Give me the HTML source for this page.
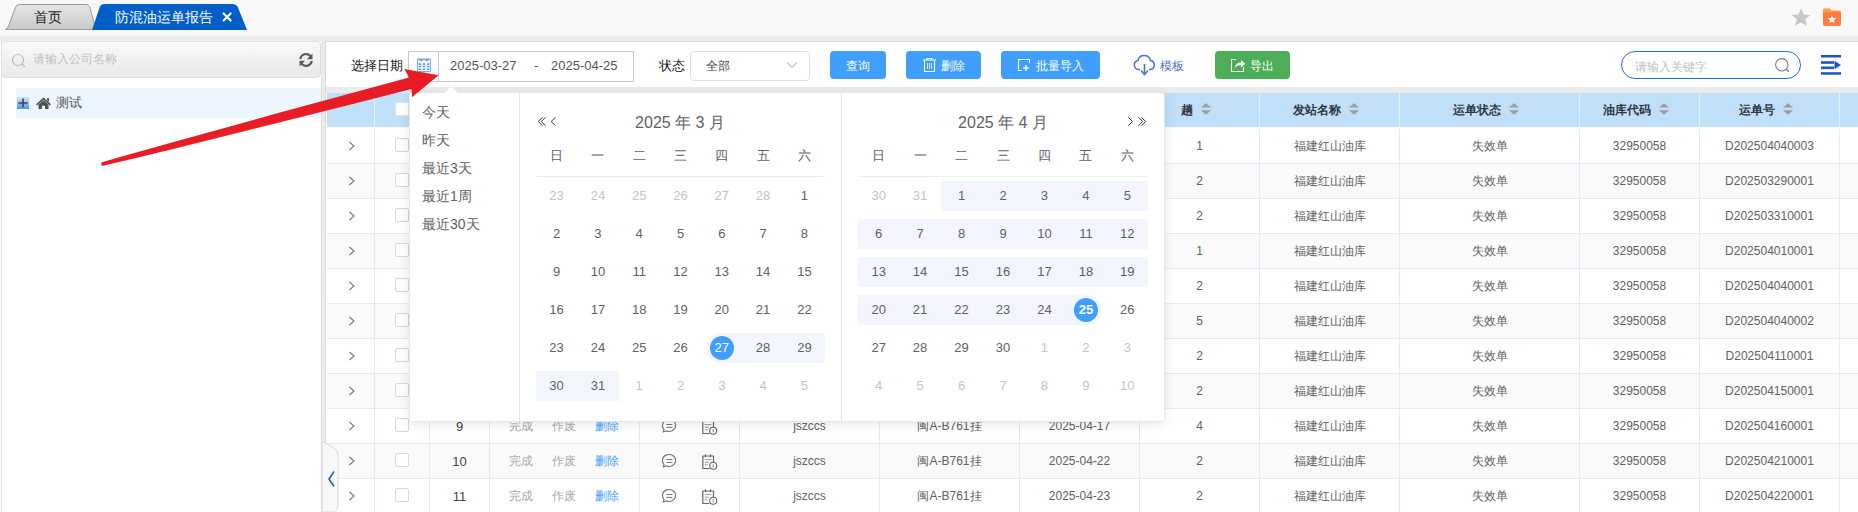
<!DOCTYPE html><html><head><meta charset="utf-8"><title>防混油运单报告</title><style>
*{box-sizing:border-box;margin:0;padding:0}
html,body{width:1858px;height:512px;overflow:hidden;background:#fff;font-family:"Liberation Sans",sans-serif;color:#606266}
div,span,svg{position:absolute}
.t{white-space:nowrap;line-height:1}
</style></head><body>
<div style="left:0;top:0;width:1858px;height:36px;background:#f8f8f8"></div>
<div style="left:0;top:36px;width:1858px;height:6px;background:#ececec"></div>
<svg style="left:0;top:0" width="260" height="36" viewBox="0 0 260 36">
<defs><linearGradient id="g1" x1="0" y1="0" x2="0" y2="1"><stop offset="0" stop-color="#e6e6e6"/><stop offset="1" stop-color="#c9c9c9"/></linearGradient></defs>
<path d="M5.5,29.5 Q7.6,28.6 8.6,26 L15.6,7 Q16.6,4.5 19,4.5 L86,4.5 Q88.5,4.5 89.5,6.5 L96,29.5 Z" fill="url(#g1)" stroke="#9a9a9a" stroke-width="1"/>
<path d="M92,30 L100,6.5 Q101,4 104,4 L233,4 Q236,4 237.5,6.5 L247,30 Z" fill="#005ec8"/>
</svg>
<div class="t" style="left:34px;top:10px;font-size:14px;color:#222">首页</div>
<div class="t" style="left:115px;top:10px;font-size:14px;color:#fff">防混油运单报告</div>
<svg style="left:220px;top:10px" width="14" height="14" viewBox="0 0 14 14"><path d="M3.6,3.4 L10.6,10.6 M10.6,3.4 L3.6,10.6" stroke="#fff" stroke-width="2.1" stroke-linecap="round"/></svg>
<svg style="left:1790px;top:6px" width="22" height="22" viewBox="0 0 22 22"><path d="M11,2 L13.6,8.4 L20.5,8.9 L15.2,13.3 L16.9,20 L11,16.4 L5.1,20 L6.8,13.3 L1.5,8.9 L8.4,8.4 Z" fill="#c8c8c8"/></svg>
<svg style="left:1822px;top:7px" width="20" height="20" viewBox="0 0 20 20"><path d="M1,3 Q1,1.5 2.5,1.5 L8,1.5 L9.5,3.5 L17.5,3.5 Q19,3.5 19,5 L19,7 L1,7 Z" fill="#f9a23c"/><rect x="1" y="5" width="18" height="14" rx="2" fill="#ff7b3f"/><path d="M10,8 L11.2,11 L14.3,11.2 L11.9,13.1 L12.7,16.2 L10,14.5 L7.3,16.2 L8.1,13.1 L5.7,11.2 L8.8,11 Z" fill="#fff"/></svg>
<div style="left:1px;top:41px;width:321px;height:471px;background:#fff;border-left:1px solid #dcdfe6"></div>
<div style="left:1px;top:41px;width:320px;height:37px;border:1px solid #dcdfe6;border-radius:4px;background:linear-gradient(#f9f9f9,#e9e9e9)"></div>
<svg style="left:11px;top:53px" width="16" height="16" viewBox="0 0 16 16"><circle cx="7" cy="7" r="5.5" fill="none" stroke="#bdbdbd" stroke-width="1.2"/><path d="M11,11 L14,14" stroke="#bdbdbd" stroke-width="1.2"/></svg>
<div class="t" style="left:33px;top:53px;font-size:12px;color:#c0c0c0">请输入公司名称</div>
<svg style="left:298px;top:52px" width="16" height="16" viewBox="0 0 16 16"><path d="M2.2,7 A6,6 0 0 1 12.6,4.2" fill="none" stroke="#5c5c5c" stroke-width="2.1"/><path d="M14.5,1.5 L14.5,7.2 L8.8,7.2 Z" fill="#5c5c5c"/><path d="M13.8,9 A6,6 0 0 1 3.4,11.8" fill="none" stroke="#5c5c5c" stroke-width="2.1"/><path d="M1.5,14.5 L1.5,8.8 L7.2,8.8 Z" fill="#5c5c5c"/></svg>
<div style="left:16px;top:88px;width:305px;height:30px;background:#edf5fe"></div>
<svg style="left:16px;top:96px" width="14" height="14" viewBox="0 0 14 14"><defs><linearGradient id="g2" x1="0" y1="0" x2="0" y2="1"><stop offset="0" stop-color="#d3e6fb"/><stop offset="1" stop-color="#4a98f0"/></linearGradient></defs><rect x="1" y="1" width="12" height="12" fill="url(#g2)"/><path d="M7,2.5 V11.5 M2.5,7 H11.5" stroke="#444" stroke-width="1.6"/></svg>
<svg style="left:35px;top:96px" width="17" height="14" viewBox="0 0 17 14"><path d="M8.5,1.5 L1,8.2 L2.2,9.4 L8.5,3.8 L14.8,9.4 L16,8.2 Z" fill="#555"/><path d="M12,2 H14 V6 L12,4.3 Z" fill="#555"/><path d="M3.5,8.5 L8.5,4.3 L13.5,8.5 V13 H10 V9.8 H7 V13 H3.5 Z" fill="#555"/></svg>
<div class="t" style="left:56px;top:95.5px;font-size:13px;color:#555">测试</div>
<div style="left:321px;top:41px;width:5px;height:471px;background:#ececec"></div>
<div style="left:321px;top:78px;width:1px;height:434px;background:#d9d9d9"></div>
<div style="left:325px;top:41px;width:1px;height:471px;background:#d9d9d9"></div>
<div style="left:325px;top:41px;width:1533px;height:1px;background:#d9d9d9"></div>
<div style="left:326px;top:42px;width:1532px;height:45px;background:#fff"></div>
<div style="left:326px;top:87px;width:1532px;height:6px;background:#ececec"></div>
<div class="t" style="left:351px;top:59px;font-size:13px;color:#111">选择日期</div>
<div style="left:408px;top:51px;width:226px;height:31px;border:1px solid #c6c8cc;background:#fff"></div>
<div style="left:438px;top:52px;width:1px;height:29px;background:#c6c8cc"></div>
<svg style="left:416px;top:57px" width="16" height="16" viewBox="0 0 16 16"><path d="M1.6,1.9 V14.6 H14.4 V1.9 H13 A2,2 0 0 1 9,1.9 H7 A2,2 0 0 1 3,1.9 Z" fill="none" stroke="#6aa6e4" stroke-width="1"/><path d="M3,1.6 A2,2.2 0 0 0 7,1.6Z M9,1.6 A2,2.2 0 0 0 13,1.6Z" fill="#6aa6e4"/><g fill="#5b9ce0"><rect x="2.6" y="6.3" width="2.6" height="1.6" rx=".5"/><rect x="6.7" y="6.3" width="2.6" height="1.6" rx=".5"/><rect x="10.8" y="6.3" width="2.6" height="1.6" rx=".5"/><rect x="2.6" y="8.8" width="2.6" height="1.5" rx=".5"/><rect x="6.7" y="8.8" width="2.6" height="1.5" rx=".5"/><rect x="10.8" y="8.8" width="2.6" height="1.5" rx=".5"/><rect x="2.6" y="11.5" width="2.6" height="1.5" rx=".5"/><rect x="6.7" y="11.5" width="2.6" height="1.5" rx=".5"/><rect x="10.8" y="11.5" width="2.6" height="1.5" rx=".5"/></g><path d="M2,8.3 H14 M2,10.9 H14 M5.7,5 V14 M9.8,5 V14" stroke="#d5e6f8" stroke-width=".6"/></svg>
<div class="t" style="left:450px;top:59px;font-size:13px;color:#555">2025-03-27</div>
<div class="t" style="left:534px;top:59px;font-size:13px;color:#555">-</div>
<div class="t" style="left:551px;top:59px;font-size:13px;color:#555">2025-04-25</div>
<div class="t" style="left:659px;top:59px;font-size:13px;color:#111">状态</div>
<div style="left:690px;top:51px;width:120px;height:30px;border:1px solid #dcdfe6;border-radius:4px;background:#fff"></div>
<div class="t" style="left:706px;top:60px;font-size:12px;color:#444">全部</div>
<svg style="left:786px;top:61px" width="12" height="8" viewBox="0 0 12 8"><path d="M1,1.5 L6,6.5 L11,1.5" fill="none" stroke="#c0c4cc" stroke-width="1.2"/></svg>
<div style="left:830px;top:51px;width:56px;height:28px;border-radius:4px;background:#409eff"></div>
<div style="left:906px;top:51px;width:75px;height:28px;border-radius:4px;background:#409eff"></div>
<div style="left:1001px;top:51px;width:99px;height:28px;border-radius:4px;background:#409eff"></div>
<div style="left:1215px;top:51px;width:75px;height:28px;border-radius:4px;background:#4cae58"></div>
<div class="t" style="left:846px;top:60px;font-size:12px;color:#fff">查询</div>
<svg style="left:922px;top:57px" width="15" height="16" viewBox="0 0 15 16"><path d="M1,3 H14 M5,3 V1.5 H10 V3" fill="none" stroke="#fff" stroke-width="1.1"/><path d="M2.5,3.5 V14.5 H12.5 V3.5" fill="none" stroke="#fff" stroke-width="1.1"/><path d="M5.5,6 V12 M7.5,6 V12 M9.5,6 V12" stroke="#cfe4ff" stroke-width="1"/></svg>
<div class="t" style="left:941px;top:60px;font-size:12px;color:#fff">删除</div>
<svg style="left:1017px;top:58px" width="14" height="14" viewBox="0 0 14 14"><path d="M5,12.5 H1.5 V1.5 H12.5 V5" fill="none" stroke="#fff" stroke-width="1.1"/><path d="M9,7 V13 M6,10 H12" stroke="#e8f2ff" stroke-width="1.6"/></svg>
<div class="t" style="left:1036px;top:60px;font-size:12px;color:#fff">批量导入</div>
<svg style="left:1133px;top:54px" width="23" height="22" viewBox="0 0 23 22"><path d="M7,15.5 H5.5 A4.5,4.5 0 0 1 5,6.6 A6.3,6.3 0 0 1 17.4,6.6 A4.5,4.5 0 0 1 17.5,15.5 H16" fill="none" stroke="#4a74cc" stroke-width="1.5"/><path d="M11.5,10 V20" stroke="#4a74cc" stroke-width="1.6"/><path d="M8,16.5 L11.5,20.5 L15,16.5" fill="none" stroke="#4a74cc" stroke-width="1.6"/></svg>
<div class="t" style="left:1160px;top:60px;font-size:12px;color:#5670c8">模板</div>
<svg style="left:1230px;top:58px" width="16" height="15" viewBox="0 0 16 15"><path d="M6,1.5 H1.5 V13.5 H13.5 V9" fill="none" stroke="#fff" stroke-width="1.1"/><path d="M4.5,10 Q6,4.5 11,4.5 V2 L15.3,5.8 L11,9.5 V7 Q7,7 4.5,10 Z" fill="#fff"/></svg>
<div class="t" style="left:1250px;top:60px;font-size:12px;color:#fff">导出</div>
<div style="left:1621px;top:51px;width:180px;height:28px;border:1.3px solid #1f70d6;border-radius:14px;background:#fff"></div>
<div class="t" style="left:1635px;top:60.5px;font-size:12px;color:#c0c0c0">请输入关键字</div>
<svg style="left:1774px;top:57px" width="16" height="16" viewBox="0 0 16 16"><circle cx="7.8" cy="7.8" r="6.2" fill="none" stroke="#777" stroke-width="1.1"/><path d="M12.3,12.3 L14.8,14.8" stroke="#777" stroke-width="1.3"/></svg>
<svg style="left:1820px;top:54px" width="22" height="22" viewBox="0 0 22 22"><g fill="#1a56c4"><rect x="1" y="1" width="20" height="2.5"/><rect x="1" y="7.2" width="13" height="2.6"/><rect x="1" y="12.5" width="13" height="2.6"/><rect x="1" y="18.2" width="20" height="2.5"/><path d="M14.5,6.8 L21,11 L14.5,15.2Z"/></g></svg>
<div style="left:326px;top:93px;width:1532px;height:419px;background:#fff"></div>
<div style="left:327px;top:93px;width:1531px;height:34px;background:#c0dff9"></div>
<div style="left:374px;top:93px;width:1px;height:34px;background:#e3effb"></div>
<div style="left:429px;top:93px;width:1px;height:34px;background:#e3effb"></div>
<div style="left:489px;top:93px;width:1px;height:34px;background:#e3effb"></div>
<div style="left:639px;top:93px;width:1px;height:34px;background:#e3effb"></div>
<div style="left:739px;top:93px;width:1px;height:34px;background:#e3effb"></div>
<div style="left:879px;top:93px;width:1px;height:34px;background:#e3effb"></div>
<div style="left:1019px;top:93px;width:1px;height:34px;background:#e3effb"></div>
<div style="left:1139px;top:93px;width:1px;height:34px;background:#e3effb"></div>
<div style="left:1259px;top:93px;width:1px;height:34px;background:#e3effb"></div>
<div style="left:1399px;top:93px;width:1px;height:34px;background:#e3effb"></div>
<div style="left:1579px;top:93px;width:1px;height:34px;background:#e3effb"></div>
<div style="left:1699px;top:93px;width:1px;height:34px;background:#e3effb"></div>
<div style="left:1839px;top:93px;width:1px;height:34px;background:#e3effb"></div>
<div style="left:327px;top:128px;width:1531px;height:35px;background:#fff"></div>
<div style="left:327px;top:163px;width:1531px;height:1px;background:#e6e9f2"></div>
<svg style="left:348px;top:141px" width="8" height="10" viewBox="0 0 8 10"><path d="M1.5,1 L6,5 L1.5,9" fill="none" stroke="#777" stroke-width="1.1"/></svg>
<div style="left:395px;top:138px;width:14px;height:14px;border:1px solid #d4d7de;border-radius:2px;background:#fff"></div>
<div class="t" style="left:359.5px;top:140px;width:200px;text-align:center;font-size:13px;color:#444;">1</div>
<div class="t" style="left:509px;top:140px;font-size:12px;color:#aaa">完成</div>
<div class="t" style="left:552px;top:140px;font-size:12px;color:#aaa">作废</div>
<div class="t" style="left:595px;top:140px;font-size:12px;color:#409eff">删除</div>
<svg style="left:661px;top:137px" width="17" height="16" viewBox="0 0 17 16"><path d="M3.2,12.6 A6.6,6 0 1 1 5.4,14 L2,15 Z" fill="none" stroke="#777" stroke-width="1.1" stroke-linejoin="round"/><path d="M5.4,7.5 H11.4 M5.4,10.4 H11.4" stroke="#777" stroke-width="1"/></svg>
<svg style="left:701px;top:138px" width="17" height="17" viewBox="0 0 17 17"><path d="M8.5,15.5 H1.8 V3 H12.5 V9" fill="none" stroke="#666" stroke-width="1.2" stroke-linejoin="round"/><path d="M4.5,1.3 V4.2 M9.5,1.3 V4.2" stroke="#666" stroke-width="1.1"/><path d="M3.8,6.6 H10.5 M3.8,9.2 H8 M3.8,11.8 H6.8" stroke="#999" stroke-width="1"/><circle cx="12.2" cy="12.8" r="3.5" fill="#fff" stroke="#666" stroke-width="1.1"/><path d="M12.2,11.3 V14.5" stroke="#777" stroke-width=".9"/></svg>
<div class="t" style="left:709.5px;top:140px;width:200px;text-align:center;font-size:12px;color:#606266;">jszccs</div>
<div class="t" style="left:849.5px;top:140px;width:200px;text-align:center;font-size:12px;color:#606266;">闽A-B761挂</div>
<div class="t" style="left:979.5px;top:140px;width:200px;text-align:center;font-size:12px;color:#606266;">2025-04-04</div>
<div class="t" style="left:1099.5px;top:140px;width:200px;text-align:center;font-size:12px;color:#606266;">1</div>
<div class="t" style="left:1229.5px;top:140px;width:200px;text-align:center;font-size:12px;color:#606266;">福建红山油库</div>
<div class="t" style="left:1389.5px;top:140px;width:200px;text-align:center;font-size:12px;color:#606266;">失效单</div>
<div class="t" style="left:1539.5px;top:140px;width:200px;text-align:center;font-size:12px;color:#606266;">32950058</div>
<div class="t" style="left:1669.5px;top:140px;width:200px;text-align:center;font-size:12px;color:#606266;">D202504040003</div>
<div style="left:327px;top:164px;width:1531px;height:35px;background:#fafafa"></div>
<div style="left:327px;top:198px;width:1531px;height:1px;background:#e6e9f2"></div>
<svg style="left:348px;top:176px" width="8" height="10" viewBox="0 0 8 10"><path d="M1.5,1 L6,5 L1.5,9" fill="none" stroke="#777" stroke-width="1.1"/></svg>
<div style="left:395px;top:173px;width:14px;height:14px;border:1px solid #d4d7de;border-radius:2px;background:#fff"></div>
<div class="t" style="left:359.5px;top:175px;width:200px;text-align:center;font-size:13px;color:#444;">2</div>
<div class="t" style="left:509px;top:175px;font-size:12px;color:#aaa">完成</div>
<div class="t" style="left:552px;top:175px;font-size:12px;color:#aaa">作废</div>
<div class="t" style="left:595px;top:175px;font-size:12px;color:#409eff">删除</div>
<svg style="left:661px;top:172px" width="17" height="16" viewBox="0 0 17 16"><path d="M3.2,12.6 A6.6,6 0 1 1 5.4,14 L2,15 Z" fill="none" stroke="#777" stroke-width="1.1" stroke-linejoin="round"/><path d="M5.4,7.5 H11.4 M5.4,10.4 H11.4" stroke="#777" stroke-width="1"/></svg>
<svg style="left:701px;top:173px" width="17" height="17" viewBox="0 0 17 17"><path d="M8.5,15.5 H1.8 V3 H12.5 V9" fill="none" stroke="#666" stroke-width="1.2" stroke-linejoin="round"/><path d="M4.5,1.3 V4.2 M9.5,1.3 V4.2" stroke="#666" stroke-width="1.1"/><path d="M3.8,6.6 H10.5 M3.8,9.2 H8 M3.8,11.8 H6.8" stroke="#999" stroke-width="1"/><circle cx="12.2" cy="12.8" r="3.5" fill="#fff" stroke="#666" stroke-width="1.1"/><path d="M12.2,11.3 V14.5" stroke="#777" stroke-width=".9"/></svg>
<div class="t" style="left:709.5px;top:175px;width:200px;text-align:center;font-size:12px;color:#606266;">jszccs</div>
<div class="t" style="left:849.5px;top:175px;width:200px;text-align:center;font-size:12px;color:#606266;">闽A-B761挂</div>
<div class="t" style="left:979.5px;top:175px;width:200px;text-align:center;font-size:12px;color:#606266;">2025-03-29</div>
<div class="t" style="left:1099.5px;top:175px;width:200px;text-align:center;font-size:12px;color:#606266;">2</div>
<div class="t" style="left:1229.5px;top:175px;width:200px;text-align:center;font-size:12px;color:#606266;">福建红山油库</div>
<div class="t" style="left:1389.5px;top:175px;width:200px;text-align:center;font-size:12px;color:#606266;">失效单</div>
<div class="t" style="left:1539.5px;top:175px;width:200px;text-align:center;font-size:12px;color:#606266;">32950058</div>
<div class="t" style="left:1669.5px;top:175px;width:200px;text-align:center;font-size:12px;color:#606266;">D202503290001</div>
<div style="left:327px;top:199px;width:1531px;height:35px;background:#fff"></div>
<div style="left:327px;top:233px;width:1531px;height:1px;background:#e6e9f2"></div>
<svg style="left:348px;top:211px" width="8" height="10" viewBox="0 0 8 10"><path d="M1.5,1 L6,5 L1.5,9" fill="none" stroke="#777" stroke-width="1.1"/></svg>
<div style="left:395px;top:208px;width:14px;height:14px;border:1px solid #d4d7de;border-radius:2px;background:#fff"></div>
<div class="t" style="left:359.5px;top:210px;width:200px;text-align:center;font-size:13px;color:#444;">3</div>
<div class="t" style="left:509px;top:210px;font-size:12px;color:#aaa">完成</div>
<div class="t" style="left:552px;top:210px;font-size:12px;color:#aaa">作废</div>
<div class="t" style="left:595px;top:210px;font-size:12px;color:#409eff">删除</div>
<svg style="left:661px;top:207px" width="17" height="16" viewBox="0 0 17 16"><path d="M3.2,12.6 A6.6,6 0 1 1 5.4,14 L2,15 Z" fill="none" stroke="#777" stroke-width="1.1" stroke-linejoin="round"/><path d="M5.4,7.5 H11.4 M5.4,10.4 H11.4" stroke="#777" stroke-width="1"/></svg>
<svg style="left:701px;top:208px" width="17" height="17" viewBox="0 0 17 17"><path d="M8.5,15.5 H1.8 V3 H12.5 V9" fill="none" stroke="#666" stroke-width="1.2" stroke-linejoin="round"/><path d="M4.5,1.3 V4.2 M9.5,1.3 V4.2" stroke="#666" stroke-width="1.1"/><path d="M3.8,6.6 H10.5 M3.8,9.2 H8 M3.8,11.8 H6.8" stroke="#999" stroke-width="1"/><circle cx="12.2" cy="12.8" r="3.5" fill="#fff" stroke="#666" stroke-width="1.1"/><path d="M12.2,11.3 V14.5" stroke="#777" stroke-width=".9"/></svg>
<div class="t" style="left:709.5px;top:210px;width:200px;text-align:center;font-size:12px;color:#606266;">jszccs</div>
<div class="t" style="left:849.5px;top:210px;width:200px;text-align:center;font-size:12px;color:#606266;">闽A-B761挂</div>
<div class="t" style="left:979.5px;top:210px;width:200px;text-align:center;font-size:12px;color:#606266;">2025-03-31</div>
<div class="t" style="left:1099.5px;top:210px;width:200px;text-align:center;font-size:12px;color:#606266;">2</div>
<div class="t" style="left:1229.5px;top:210px;width:200px;text-align:center;font-size:12px;color:#606266;">福建红山油库</div>
<div class="t" style="left:1389.5px;top:210px;width:200px;text-align:center;font-size:12px;color:#606266;">失效单</div>
<div class="t" style="left:1539.5px;top:210px;width:200px;text-align:center;font-size:12px;color:#606266;">32950058</div>
<div class="t" style="left:1669.5px;top:210px;width:200px;text-align:center;font-size:12px;color:#606266;">D202503310001</div>
<div style="left:327px;top:234px;width:1531px;height:35px;background:#fafafa"></div>
<div style="left:327px;top:268px;width:1531px;height:1px;background:#e6e9f2"></div>
<svg style="left:348px;top:246px" width="8" height="10" viewBox="0 0 8 10"><path d="M1.5,1 L6,5 L1.5,9" fill="none" stroke="#777" stroke-width="1.1"/></svg>
<div style="left:395px;top:243px;width:14px;height:14px;border:1px solid #d4d7de;border-radius:2px;background:#fff"></div>
<div class="t" style="left:359.5px;top:245px;width:200px;text-align:center;font-size:13px;color:#444;">4</div>
<div class="t" style="left:509px;top:245px;font-size:12px;color:#aaa">完成</div>
<div class="t" style="left:552px;top:245px;font-size:12px;color:#aaa">作废</div>
<div class="t" style="left:595px;top:245px;font-size:12px;color:#409eff">删除</div>
<svg style="left:661px;top:242px" width="17" height="16" viewBox="0 0 17 16"><path d="M3.2,12.6 A6.6,6 0 1 1 5.4,14 L2,15 Z" fill="none" stroke="#777" stroke-width="1.1" stroke-linejoin="round"/><path d="M5.4,7.5 H11.4 M5.4,10.4 H11.4" stroke="#777" stroke-width="1"/></svg>
<svg style="left:701px;top:243px" width="17" height="17" viewBox="0 0 17 17"><path d="M8.5,15.5 H1.8 V3 H12.5 V9" fill="none" stroke="#666" stroke-width="1.2" stroke-linejoin="round"/><path d="M4.5,1.3 V4.2 M9.5,1.3 V4.2" stroke="#666" stroke-width="1.1"/><path d="M3.8,6.6 H10.5 M3.8,9.2 H8 M3.8,11.8 H6.8" stroke="#999" stroke-width="1"/><circle cx="12.2" cy="12.8" r="3.5" fill="#fff" stroke="#666" stroke-width="1.1"/><path d="M12.2,11.3 V14.5" stroke="#777" stroke-width=".9"/></svg>
<div class="t" style="left:709.5px;top:245px;width:200px;text-align:center;font-size:12px;color:#606266;">jszccs</div>
<div class="t" style="left:849.5px;top:245px;width:200px;text-align:center;font-size:12px;color:#606266;">闽A-B761挂</div>
<div class="t" style="left:979.5px;top:245px;width:200px;text-align:center;font-size:12px;color:#606266;">2025-04-01</div>
<div class="t" style="left:1099.5px;top:245px;width:200px;text-align:center;font-size:12px;color:#606266;">1</div>
<div class="t" style="left:1229.5px;top:245px;width:200px;text-align:center;font-size:12px;color:#606266;">福建红山油库</div>
<div class="t" style="left:1389.5px;top:245px;width:200px;text-align:center;font-size:12px;color:#606266;">失效单</div>
<div class="t" style="left:1539.5px;top:245px;width:200px;text-align:center;font-size:12px;color:#606266;">32950058</div>
<div class="t" style="left:1669.5px;top:245px;width:200px;text-align:center;font-size:12px;color:#606266;">D202504010001</div>
<div style="left:327px;top:269px;width:1531px;height:35px;background:#fff"></div>
<div style="left:327px;top:303px;width:1531px;height:1px;background:#e6e9f2"></div>
<svg style="left:348px;top:281px" width="8" height="10" viewBox="0 0 8 10"><path d="M1.5,1 L6,5 L1.5,9" fill="none" stroke="#777" stroke-width="1.1"/></svg>
<div style="left:395px;top:278px;width:14px;height:14px;border:1px solid #d4d7de;border-radius:2px;background:#fff"></div>
<div class="t" style="left:359.5px;top:280px;width:200px;text-align:center;font-size:13px;color:#444;">5</div>
<div class="t" style="left:509px;top:280px;font-size:12px;color:#aaa">完成</div>
<div class="t" style="left:552px;top:280px;font-size:12px;color:#aaa">作废</div>
<div class="t" style="left:595px;top:280px;font-size:12px;color:#409eff">删除</div>
<svg style="left:661px;top:277px" width="17" height="16" viewBox="0 0 17 16"><path d="M3.2,12.6 A6.6,6 0 1 1 5.4,14 L2,15 Z" fill="none" stroke="#777" stroke-width="1.1" stroke-linejoin="round"/><path d="M5.4,7.5 H11.4 M5.4,10.4 H11.4" stroke="#777" stroke-width="1"/></svg>
<svg style="left:701px;top:278px" width="17" height="17" viewBox="0 0 17 17"><path d="M8.5,15.5 H1.8 V3 H12.5 V9" fill="none" stroke="#666" stroke-width="1.2" stroke-linejoin="round"/><path d="M4.5,1.3 V4.2 M9.5,1.3 V4.2" stroke="#666" stroke-width="1.1"/><path d="M3.8,6.6 H10.5 M3.8,9.2 H8 M3.8,11.8 H6.8" stroke="#999" stroke-width="1"/><circle cx="12.2" cy="12.8" r="3.5" fill="#fff" stroke="#666" stroke-width="1.1"/><path d="M12.2,11.3 V14.5" stroke="#777" stroke-width=".9"/></svg>
<div class="t" style="left:709.5px;top:280px;width:200px;text-align:center;font-size:12px;color:#606266;">jszccs</div>
<div class="t" style="left:849.5px;top:280px;width:200px;text-align:center;font-size:12px;color:#606266;">闽A-B761挂</div>
<div class="t" style="left:979.5px;top:280px;width:200px;text-align:center;font-size:12px;color:#606266;">2025-04-04</div>
<div class="t" style="left:1099.5px;top:280px;width:200px;text-align:center;font-size:12px;color:#606266;">2</div>
<div class="t" style="left:1229.5px;top:280px;width:200px;text-align:center;font-size:12px;color:#606266;">福建红山油库</div>
<div class="t" style="left:1389.5px;top:280px;width:200px;text-align:center;font-size:12px;color:#606266;">失效单</div>
<div class="t" style="left:1539.5px;top:280px;width:200px;text-align:center;font-size:12px;color:#606266;">32950058</div>
<div class="t" style="left:1669.5px;top:280px;width:200px;text-align:center;font-size:12px;color:#606266;">D202504040001</div>
<div style="left:327px;top:304px;width:1531px;height:35px;background:#fafafa"></div>
<div style="left:327px;top:338px;width:1531px;height:1px;background:#e6e9f2"></div>
<svg style="left:348px;top:316px" width="8" height="10" viewBox="0 0 8 10"><path d="M1.5,1 L6,5 L1.5,9" fill="none" stroke="#777" stroke-width="1.1"/></svg>
<div style="left:395px;top:313px;width:14px;height:14px;border:1px solid #d4d7de;border-radius:2px;background:#fff"></div>
<div class="t" style="left:359.5px;top:315px;width:200px;text-align:center;font-size:13px;color:#444;">6</div>
<div class="t" style="left:509px;top:315px;font-size:12px;color:#aaa">完成</div>
<div class="t" style="left:552px;top:315px;font-size:12px;color:#aaa">作废</div>
<div class="t" style="left:595px;top:315px;font-size:12px;color:#409eff">删除</div>
<svg style="left:661px;top:312px" width="17" height="16" viewBox="0 0 17 16"><path d="M3.2,12.6 A6.6,6 0 1 1 5.4,14 L2,15 Z" fill="none" stroke="#777" stroke-width="1.1" stroke-linejoin="round"/><path d="M5.4,7.5 H11.4 M5.4,10.4 H11.4" stroke="#777" stroke-width="1"/></svg>
<svg style="left:701px;top:313px" width="17" height="17" viewBox="0 0 17 17"><path d="M8.5,15.5 H1.8 V3 H12.5 V9" fill="none" stroke="#666" stroke-width="1.2" stroke-linejoin="round"/><path d="M4.5,1.3 V4.2 M9.5,1.3 V4.2" stroke="#666" stroke-width="1.1"/><path d="M3.8,6.6 H10.5 M3.8,9.2 H8 M3.8,11.8 H6.8" stroke="#999" stroke-width="1"/><circle cx="12.2" cy="12.8" r="3.5" fill="#fff" stroke="#666" stroke-width="1.1"/><path d="M12.2,11.3 V14.5" stroke="#777" stroke-width=".9"/></svg>
<div class="t" style="left:709.5px;top:315px;width:200px;text-align:center;font-size:12px;color:#606266;">jszccs</div>
<div class="t" style="left:849.5px;top:315px;width:200px;text-align:center;font-size:12px;color:#606266;">闽A-B761挂</div>
<div class="t" style="left:979.5px;top:315px;width:200px;text-align:center;font-size:12px;color:#606266;">2025-04-04</div>
<div class="t" style="left:1099.5px;top:315px;width:200px;text-align:center;font-size:12px;color:#606266;">5</div>
<div class="t" style="left:1229.5px;top:315px;width:200px;text-align:center;font-size:12px;color:#606266;">福建红山油库</div>
<div class="t" style="left:1389.5px;top:315px;width:200px;text-align:center;font-size:12px;color:#606266;">失效单</div>
<div class="t" style="left:1539.5px;top:315px;width:200px;text-align:center;font-size:12px;color:#606266;">32950058</div>
<div class="t" style="left:1669.5px;top:315px;width:200px;text-align:center;font-size:12px;color:#606266;">D202504040002</div>
<div style="left:327px;top:339px;width:1531px;height:35px;background:#fff"></div>
<div style="left:327px;top:373px;width:1531px;height:1px;background:#e6e9f2"></div>
<svg style="left:348px;top:351px" width="8" height="10" viewBox="0 0 8 10"><path d="M1.5,1 L6,5 L1.5,9" fill="none" stroke="#777" stroke-width="1.1"/></svg>
<div style="left:395px;top:348px;width:14px;height:14px;border:1px solid #d4d7de;border-radius:2px;background:#fff"></div>
<div class="t" style="left:359.5px;top:350px;width:200px;text-align:center;font-size:13px;color:#444;">7</div>
<div class="t" style="left:509px;top:350px;font-size:12px;color:#aaa">完成</div>
<div class="t" style="left:552px;top:350px;font-size:12px;color:#aaa">作废</div>
<div class="t" style="left:595px;top:350px;font-size:12px;color:#409eff">删除</div>
<svg style="left:661px;top:347px" width="17" height="16" viewBox="0 0 17 16"><path d="M3.2,12.6 A6.6,6 0 1 1 5.4,14 L2,15 Z" fill="none" stroke="#777" stroke-width="1.1" stroke-linejoin="round"/><path d="M5.4,7.5 H11.4 M5.4,10.4 H11.4" stroke="#777" stroke-width="1"/></svg>
<svg style="left:701px;top:348px" width="17" height="17" viewBox="0 0 17 17"><path d="M8.5,15.5 H1.8 V3 H12.5 V9" fill="none" stroke="#666" stroke-width="1.2" stroke-linejoin="round"/><path d="M4.5,1.3 V4.2 M9.5,1.3 V4.2" stroke="#666" stroke-width="1.1"/><path d="M3.8,6.6 H10.5 M3.8,9.2 H8 M3.8,11.8 H6.8" stroke="#999" stroke-width="1"/><circle cx="12.2" cy="12.8" r="3.5" fill="#fff" stroke="#666" stroke-width="1.1"/><path d="M12.2,11.3 V14.5" stroke="#777" stroke-width=".9"/></svg>
<div class="t" style="left:709.5px;top:350px;width:200px;text-align:center;font-size:12px;color:#606266;">jszccs</div>
<div class="t" style="left:849.5px;top:350px;width:200px;text-align:center;font-size:12px;color:#606266;">闽A-B761挂</div>
<div class="t" style="left:979.5px;top:350px;width:200px;text-align:center;font-size:12px;color:#606266;">2025-04-11</div>
<div class="t" style="left:1099.5px;top:350px;width:200px;text-align:center;font-size:12px;color:#606266;">2</div>
<div class="t" style="left:1229.5px;top:350px;width:200px;text-align:center;font-size:12px;color:#606266;">福建红山油库</div>
<div class="t" style="left:1389.5px;top:350px;width:200px;text-align:center;font-size:12px;color:#606266;">失效单</div>
<div class="t" style="left:1539.5px;top:350px;width:200px;text-align:center;font-size:12px;color:#606266;">32950058</div>
<div class="t" style="left:1669.5px;top:350px;width:200px;text-align:center;font-size:12px;color:#606266;">D202504110001</div>
<div style="left:327px;top:374px;width:1531px;height:35px;background:#fafafa"></div>
<div style="left:327px;top:408px;width:1531px;height:1px;background:#e6e9f2"></div>
<svg style="left:348px;top:386px" width="8" height="10" viewBox="0 0 8 10"><path d="M1.5,1 L6,5 L1.5,9" fill="none" stroke="#777" stroke-width="1.1"/></svg>
<div style="left:395px;top:383px;width:14px;height:14px;border:1px solid #d4d7de;border-radius:2px;background:#fff"></div>
<div class="t" style="left:359.5px;top:385px;width:200px;text-align:center;font-size:13px;color:#444;">8</div>
<div class="t" style="left:509px;top:385px;font-size:12px;color:#aaa">完成</div>
<div class="t" style="left:552px;top:385px;font-size:12px;color:#aaa">作废</div>
<div class="t" style="left:595px;top:385px;font-size:12px;color:#409eff">删除</div>
<svg style="left:661px;top:382px" width="17" height="16" viewBox="0 0 17 16"><path d="M3.2,12.6 A6.6,6 0 1 1 5.4,14 L2,15 Z" fill="none" stroke="#777" stroke-width="1.1" stroke-linejoin="round"/><path d="M5.4,7.5 H11.4 M5.4,10.4 H11.4" stroke="#777" stroke-width="1"/></svg>
<svg style="left:701px;top:383px" width="17" height="17" viewBox="0 0 17 17"><path d="M8.5,15.5 H1.8 V3 H12.5 V9" fill="none" stroke="#666" stroke-width="1.2" stroke-linejoin="round"/><path d="M4.5,1.3 V4.2 M9.5,1.3 V4.2" stroke="#666" stroke-width="1.1"/><path d="M3.8,6.6 H10.5 M3.8,9.2 H8 M3.8,11.8 H6.8" stroke="#999" stroke-width="1"/><circle cx="12.2" cy="12.8" r="3.5" fill="#fff" stroke="#666" stroke-width="1.1"/><path d="M12.2,11.3 V14.5" stroke="#777" stroke-width=".9"/></svg>
<div class="t" style="left:709.5px;top:385px;width:200px;text-align:center;font-size:12px;color:#606266;">jszccs</div>
<div class="t" style="left:849.5px;top:385px;width:200px;text-align:center;font-size:12px;color:#606266;">闽A-B761挂</div>
<div class="t" style="left:979.5px;top:385px;width:200px;text-align:center;font-size:12px;color:#606266;">2025-04-15</div>
<div class="t" style="left:1099.5px;top:385px;width:200px;text-align:center;font-size:12px;color:#606266;">2</div>
<div class="t" style="left:1229.5px;top:385px;width:200px;text-align:center;font-size:12px;color:#606266;">福建红山油库</div>
<div class="t" style="left:1389.5px;top:385px;width:200px;text-align:center;font-size:12px;color:#606266;">失效单</div>
<div class="t" style="left:1539.5px;top:385px;width:200px;text-align:center;font-size:12px;color:#606266;">32950058</div>
<div class="t" style="left:1669.5px;top:385px;width:200px;text-align:center;font-size:12px;color:#606266;">D202504150001</div>
<div style="left:327px;top:409px;width:1531px;height:35px;background:#fff"></div>
<div style="left:327px;top:443px;width:1531px;height:1px;background:#e6e9f2"></div>
<svg style="left:348px;top:421px" width="8" height="10" viewBox="0 0 8 10"><path d="M1.5,1 L6,5 L1.5,9" fill="none" stroke="#777" stroke-width="1.1"/></svg>
<div style="left:395px;top:418px;width:14px;height:14px;border:1px solid #d4d7de;border-radius:2px;background:#fff"></div>
<div class="t" style="left:359.5px;top:420px;width:200px;text-align:center;font-size:13px;color:#444;">9</div>
<div class="t" style="left:509px;top:420px;font-size:12px;color:#aaa">完成</div>
<div class="t" style="left:552px;top:420px;font-size:12px;color:#aaa">作废</div>
<div class="t" style="left:595px;top:420px;font-size:12px;color:#409eff">删除</div>
<svg style="left:661px;top:417px" width="17" height="16" viewBox="0 0 17 16"><path d="M3.2,12.6 A6.6,6 0 1 1 5.4,14 L2,15 Z" fill="none" stroke="#777" stroke-width="1.1" stroke-linejoin="round"/><path d="M5.4,7.5 H11.4 M5.4,10.4 H11.4" stroke="#777" stroke-width="1"/></svg>
<svg style="left:701px;top:418px" width="17" height="17" viewBox="0 0 17 17"><path d="M8.5,15.5 H1.8 V3 H12.5 V9" fill="none" stroke="#666" stroke-width="1.2" stroke-linejoin="round"/><path d="M4.5,1.3 V4.2 M9.5,1.3 V4.2" stroke="#666" stroke-width="1.1"/><path d="M3.8,6.6 H10.5 M3.8,9.2 H8 M3.8,11.8 H6.8" stroke="#999" stroke-width="1"/><circle cx="12.2" cy="12.8" r="3.5" fill="#fff" stroke="#666" stroke-width="1.1"/><path d="M12.2,11.3 V14.5" stroke="#777" stroke-width=".9"/></svg>
<div class="t" style="left:709.5px;top:420px;width:200px;text-align:center;font-size:12px;color:#606266;">jszccs</div>
<div class="t" style="left:849.5px;top:420px;width:200px;text-align:center;font-size:12px;color:#606266;">闽A-B761挂</div>
<div class="t" style="left:979.5px;top:420px;width:200px;text-align:center;font-size:12px;color:#606266;">2025-04-17</div>
<div class="t" style="left:1099.5px;top:420px;width:200px;text-align:center;font-size:12px;color:#606266;">4</div>
<div class="t" style="left:1229.5px;top:420px;width:200px;text-align:center;font-size:12px;color:#606266;">福建红山油库</div>
<div class="t" style="left:1389.5px;top:420px;width:200px;text-align:center;font-size:12px;color:#606266;">失效单</div>
<div class="t" style="left:1539.5px;top:420px;width:200px;text-align:center;font-size:12px;color:#606266;">32950058</div>
<div class="t" style="left:1669.5px;top:420px;width:200px;text-align:center;font-size:12px;color:#606266;">D202504160001</div>
<div style="left:327px;top:444px;width:1531px;height:35px;background:#fafafa"></div>
<div style="left:327px;top:478px;width:1531px;height:1px;background:#e6e9f2"></div>
<svg style="left:348px;top:456px" width="8" height="10" viewBox="0 0 8 10"><path d="M1.5,1 L6,5 L1.5,9" fill="none" stroke="#777" stroke-width="1.1"/></svg>
<div style="left:395px;top:453px;width:14px;height:14px;border:1px solid #d4d7de;border-radius:2px;background:#fff"></div>
<div class="t" style="left:359.5px;top:455px;width:200px;text-align:center;font-size:13px;color:#444;">10</div>
<div class="t" style="left:509px;top:455px;font-size:12px;color:#aaa">完成</div>
<div class="t" style="left:552px;top:455px;font-size:12px;color:#aaa">作废</div>
<div class="t" style="left:595px;top:455px;font-size:12px;color:#409eff">删除</div>
<svg style="left:661px;top:452px" width="17" height="16" viewBox="0 0 17 16"><path d="M3.2,12.6 A6.6,6 0 1 1 5.4,14 L2,15 Z" fill="none" stroke="#777" stroke-width="1.1" stroke-linejoin="round"/><path d="M5.4,7.5 H11.4 M5.4,10.4 H11.4" stroke="#777" stroke-width="1"/></svg>
<svg style="left:701px;top:453px" width="17" height="17" viewBox="0 0 17 17"><path d="M8.5,15.5 H1.8 V3 H12.5 V9" fill="none" stroke="#666" stroke-width="1.2" stroke-linejoin="round"/><path d="M4.5,1.3 V4.2 M9.5,1.3 V4.2" stroke="#666" stroke-width="1.1"/><path d="M3.8,6.6 H10.5 M3.8,9.2 H8 M3.8,11.8 H6.8" stroke="#999" stroke-width="1"/><circle cx="12.2" cy="12.8" r="3.5" fill="#fff" stroke="#666" stroke-width="1.1"/><path d="M12.2,11.3 V14.5" stroke="#777" stroke-width=".9"/></svg>
<div class="t" style="left:709.5px;top:455px;width:200px;text-align:center;font-size:12px;color:#606266;">jszccs</div>
<div class="t" style="left:849.5px;top:455px;width:200px;text-align:center;font-size:12px;color:#606266;">闽A-B761挂</div>
<div class="t" style="left:979.5px;top:455px;width:200px;text-align:center;font-size:12px;color:#606266;">2025-04-22</div>
<div class="t" style="left:1099.5px;top:455px;width:200px;text-align:center;font-size:12px;color:#606266;">2</div>
<div class="t" style="left:1229.5px;top:455px;width:200px;text-align:center;font-size:12px;color:#606266;">福建红山油库</div>
<div class="t" style="left:1389.5px;top:455px;width:200px;text-align:center;font-size:12px;color:#606266;">失效单</div>
<div class="t" style="left:1539.5px;top:455px;width:200px;text-align:center;font-size:12px;color:#606266;">32950058</div>
<div class="t" style="left:1669.5px;top:455px;width:200px;text-align:center;font-size:12px;color:#606266;">D202504210001</div>
<div style="left:327px;top:479px;width:1531px;height:35px;background:#fff"></div>
<div style="left:327px;top:513px;width:1531px;height:1px;background:#e6e9f2"></div>
<svg style="left:348px;top:491px" width="8" height="10" viewBox="0 0 8 10"><path d="M1.5,1 L6,5 L1.5,9" fill="none" stroke="#777" stroke-width="1.1"/></svg>
<div style="left:395px;top:488px;width:14px;height:14px;border:1px solid #d4d7de;border-radius:2px;background:#fff"></div>
<div class="t" style="left:359.5px;top:490px;width:200px;text-align:center;font-size:13px;color:#444;">11</div>
<div class="t" style="left:509px;top:490px;font-size:12px;color:#aaa">完成</div>
<div class="t" style="left:552px;top:490px;font-size:12px;color:#aaa">作废</div>
<div class="t" style="left:595px;top:490px;font-size:12px;color:#409eff">删除</div>
<svg style="left:661px;top:487px" width="17" height="16" viewBox="0 0 17 16"><path d="M3.2,12.6 A6.6,6 0 1 1 5.4,14 L2,15 Z" fill="none" stroke="#777" stroke-width="1.1" stroke-linejoin="round"/><path d="M5.4,7.5 H11.4 M5.4,10.4 H11.4" stroke="#777" stroke-width="1"/></svg>
<svg style="left:701px;top:488px" width="17" height="17" viewBox="0 0 17 17"><path d="M8.5,15.5 H1.8 V3 H12.5 V9" fill="none" stroke="#666" stroke-width="1.2" stroke-linejoin="round"/><path d="M4.5,1.3 V4.2 M9.5,1.3 V4.2" stroke="#666" stroke-width="1.1"/><path d="M3.8,6.6 H10.5 M3.8,9.2 H8 M3.8,11.8 H6.8" stroke="#999" stroke-width="1"/><circle cx="12.2" cy="12.8" r="3.5" fill="#fff" stroke="#666" stroke-width="1.1"/><path d="M12.2,11.3 V14.5" stroke="#777" stroke-width=".9"/></svg>
<div class="t" style="left:709.5px;top:490px;width:200px;text-align:center;font-size:12px;color:#606266;">jszccs</div>
<div class="t" style="left:849.5px;top:490px;width:200px;text-align:center;font-size:12px;color:#606266;">闽A-B761挂</div>
<div class="t" style="left:979.5px;top:490px;width:200px;text-align:center;font-size:12px;color:#606266;">2025-04-23</div>
<div class="t" style="left:1099.5px;top:490px;width:200px;text-align:center;font-size:12px;color:#606266;">2</div>
<div class="t" style="left:1229.5px;top:490px;width:200px;text-align:center;font-size:12px;color:#606266;">福建红山油库</div>
<div class="t" style="left:1389.5px;top:490px;width:200px;text-align:center;font-size:12px;color:#606266;">失效单</div>
<div class="t" style="left:1539.5px;top:490px;width:200px;text-align:center;font-size:12px;color:#606266;">32950058</div>
<div class="t" style="left:1669.5px;top:490px;width:200px;text-align:center;font-size:12px;color:#606266;">D202504220001</div>
<div style="left:374px;top:129px;width:1px;height:383px;background:#e6e9f2"></div>
<div style="left:429px;top:129px;width:1px;height:383px;background:#e6e9f2"></div>
<div style="left:489px;top:129px;width:1px;height:383px;background:#e6e9f2"></div>
<div style="left:639px;top:129px;width:1px;height:383px;background:#e6e9f2"></div>
<div style="left:739px;top:129px;width:1px;height:383px;background:#e6e9f2"></div>
<div style="left:879px;top:129px;width:1px;height:383px;background:#e6e9f2"></div>
<div style="left:1019px;top:129px;width:1px;height:383px;background:#e6e9f2"></div>
<div style="left:1139px;top:129px;width:1px;height:383px;background:#e6e9f2"></div>
<div style="left:1259px;top:129px;width:1px;height:383px;background:#e6e9f2"></div>
<div style="left:1399px;top:129px;width:1px;height:383px;background:#e6e9f2"></div>
<div style="left:1579px;top:129px;width:1px;height:383px;background:#e6e9f2"></div>
<div style="left:1699px;top:129px;width:1px;height:383px;background:#e6e9f2"></div>
<div style="left:1839px;top:129px;width:1px;height:383px;background:#e6e9f2"></div>
<div style="left:395px;top:102px;width:14px;height:14px;border:1px solid #dfe6ee;border-radius:2px;background:#fff"></div>
<div class="t" style="left:1181px;top:103.5px;font-size:12px;font-weight:bold;color:#303641">趟</div>
<svg style="left:1201px;top:103px" width="10" height="12" viewBox="0 0 10 12"><path d="M0,4.6 L5,0.2 L10,4.6Z M0,7.2 L10,7.2 L5,11.8Z" fill="#9e9c9c"/></svg>
<div class="t" style="left:1293px;top:103.5px;font-size:12px;font-weight:bold;color:#303641">发站名称</div>
<svg style="left:1349px;top:103px" width="10" height="12" viewBox="0 0 10 12"><path d="M0,4.6 L5,0.2 L10,4.6Z M0,7.2 L10,7.2 L5,11.8Z" fill="#9e9c9c"/></svg>
<div class="t" style="left:1453px;top:103.5px;font-size:12px;font-weight:bold;color:#303641">运单状态</div>
<svg style="left:1509px;top:103px" width="10" height="12" viewBox="0 0 10 12"><path d="M0,4.6 L5,0.2 L10,4.6Z M0,7.2 L10,7.2 L5,11.8Z" fill="#9e9c9c"/></svg>
<div class="t" style="left:1603px;top:103.5px;font-size:12px;font-weight:bold;color:#303641">油库代码</div>
<svg style="left:1659px;top:103px" width="10" height="12" viewBox="0 0 10 12"><path d="M0,4.6 L5,0.2 L10,4.6Z M0,7.2 L10,7.2 L5,11.8Z" fill="#9e9c9c"/></svg>
<div class="t" style="left:1739px;top:103.5px;font-size:12px;font-weight:bold;color:#303641">运单号</div>
<svg style="left:1783px;top:103px" width="10" height="12" viewBox="0 0 10 12"><path d="M0,4.6 L5,0.2 L10,4.6Z M0,7.2 L10,7.2 L5,11.8Z" fill="#9e9c9c"/></svg>
<svg style="left:321px;top:440px" width="20" height="72" viewBox="0 0 20 72"><path d="M1,1 L13,8 Q17,10 17,14 L17,66 Q17,70 13,72 L1,72 Z" fill="#f8f8f8" stroke="#d8d8d8" stroke-width="1"/><path d="M13,31.5 L8,39 L13,46.5" fill="none" stroke="#1a5fc8" stroke-width="1.6"/></svg>
<div style="left:409px;top:92px;width:756px;height:330px;background:#fff;border:1px solid #e4e7ed;border-radius:0 4px 4px 0;box-shadow:0 2px 12px 0 rgba(0,0,0,.1)"></div>
<svg style="left:444px;top:85px" width="14" height="8" viewBox="0 0 14 8"><path d="M0.5,8 L7,1 L13.5,8Z" fill="#fff"/></svg>
<div style="left:519px;top:92px;width:1px;height:329px;background:#e4e4e4"></div>
<div style="left:841px;top:92px;width:1px;height:329px;background:#e4e4e4"></div>
<div class="t" style="left:422px;top:105px;font-size:14px;color:#606266">今天</div>
<div class="t" style="left:422px;top:133px;font-size:14px;color:#606266">昨天</div>
<div class="t" style="left:422px;top:161px;font-size:14px;color:#606266">最近3天</div>
<div class="t" style="left:422px;top:189px;font-size:14px;color:#606266">最近1周</div>
<div class="t" style="left:422px;top:217px;font-size:14px;color:#606266">最近30天</div>
<div class="t" style="left:580px;top:115px;width:200px;text-align:center;font-size:16px;color:#606266">2025 年 3 月</div>
<div class="t" style="left:903px;top:115px;width:200px;text-align:center;font-size:16px;color:#606266">2025 年 4 月</div>
<svg style="left:536px;top:116px" width="22" height="12" viewBox="0 0 22 12"><path d="M6.5,1.3 L2.3,5.5 L6.5,9.7 M9.5,1.3 L5.3,5.5 L9.5,9.7 M19.5,1.3 L15.2,5.5 L19.5,9.7" fill="none" stroke="#303133" stroke-width="1"/></svg>
<svg style="left:1126px;top:116px" width="22" height="12" viewBox="0 0 22 12"><path d="M2.3,1.3 L6.5,5.5 L2.3,9.7 M12.5,1.3 L16.6,5.5 L12.5,9.7 M15.5,1.3 L19.6,5.5 L15.5,9.7" fill="none" stroke="#303133" stroke-width="1"/></svg>
<div class="t" style="left:536.6px;top:149px;width:40px;text-align:center;font-size:13px;color:#606266">日</div>
<div class="t" style="left:577.9px;top:149px;width:40px;text-align:center;font-size:13px;color:#606266">一</div>
<div class="t" style="left:619.2px;top:149px;width:40px;text-align:center;font-size:13px;color:#606266">二</div>
<div class="t" style="left:660.5px;top:149px;width:40px;text-align:center;font-size:13px;color:#606266">三</div>
<div class="t" style="left:701.8px;top:149px;width:40px;text-align:center;font-size:13px;color:#606266">四</div>
<div class="t" style="left:743.1px;top:149px;width:40px;text-align:center;font-size:13px;color:#606266">五</div>
<div class="t" style="left:784.4px;top:149px;width:40px;text-align:center;font-size:13px;color:#606266">六</div>
<div style="left:536px;top:176px;width:289px;height:1px;background:#ebeef5"></div>
<div class="t" style="left:536.6px;top:189px;width:40px;text-align:center;font-size:13px;color:#c0c4cc;">23</div>
<div class="t" style="left:577.9px;top:189px;width:40px;text-align:center;font-size:13px;color:#c0c4cc;">24</div>
<div class="t" style="left:619.2px;top:189px;width:40px;text-align:center;font-size:13px;color:#c0c4cc;">25</div>
<div class="t" style="left:660.5px;top:189px;width:40px;text-align:center;font-size:13px;color:#c0c4cc;">26</div>
<div class="t" style="left:701.8px;top:189px;width:40px;text-align:center;font-size:13px;color:#c0c4cc;">27</div>
<div class="t" style="left:743.1px;top:189px;width:40px;text-align:center;font-size:13px;color:#c0c4cc;">28</div>
<div class="t" style="left:784.4px;top:189px;width:40px;text-align:center;font-size:13px;color:#606266;">1</div>
<div class="t" style="left:536.6px;top:227px;width:40px;text-align:center;font-size:13px;color:#606266;">2</div>
<div class="t" style="left:577.9px;top:227px;width:40px;text-align:center;font-size:13px;color:#606266;">3</div>
<div class="t" style="left:619.2px;top:227px;width:40px;text-align:center;font-size:13px;color:#606266;">4</div>
<div class="t" style="left:660.5px;top:227px;width:40px;text-align:center;font-size:13px;color:#606266;">5</div>
<div class="t" style="left:701.8px;top:227px;width:40px;text-align:center;font-size:13px;color:#606266;">6</div>
<div class="t" style="left:743.1px;top:227px;width:40px;text-align:center;font-size:13px;color:#606266;">7</div>
<div class="t" style="left:784.4px;top:227px;width:40px;text-align:center;font-size:13px;color:#606266;">8</div>
<div class="t" style="left:536.6px;top:265px;width:40px;text-align:center;font-size:13px;color:#606266;">9</div>
<div class="t" style="left:577.9px;top:265px;width:40px;text-align:center;font-size:13px;color:#606266;">10</div>
<div class="t" style="left:619.2px;top:265px;width:40px;text-align:center;font-size:13px;color:#606266;">11</div>
<div class="t" style="left:660.5px;top:265px;width:40px;text-align:center;font-size:13px;color:#606266;">12</div>
<div class="t" style="left:701.8px;top:265px;width:40px;text-align:center;font-size:13px;color:#606266;">13</div>
<div class="t" style="left:743.1px;top:265px;width:40px;text-align:center;font-size:13px;color:#606266;">14</div>
<div class="t" style="left:784.4px;top:265px;width:40px;text-align:center;font-size:13px;color:#606266;">15</div>
<div class="t" style="left:536.6px;top:303px;width:40px;text-align:center;font-size:13px;color:#606266;">16</div>
<div class="t" style="left:577.9px;top:303px;width:40px;text-align:center;font-size:13px;color:#606266;">17</div>
<div class="t" style="left:619.2px;top:303px;width:40px;text-align:center;font-size:13px;color:#606266;">18</div>
<div class="t" style="left:660.5px;top:303px;width:40px;text-align:center;font-size:13px;color:#606266;">19</div>
<div class="t" style="left:701.8px;top:303px;width:40px;text-align:center;font-size:13px;color:#606266;">20</div>
<div class="t" style="left:743.1px;top:303px;width:40px;text-align:center;font-size:13px;color:#606266;">21</div>
<div class="t" style="left:784.4px;top:303px;width:40px;text-align:center;font-size:13px;color:#606266;">22</div>
<div style="left:706.1px;top:333px;width:118.9px;height:30px;background:#f2f6fc;border-radius:15px 0 0 15px"></div>
<div class="t" style="left:536.6px;top:341px;width:40px;text-align:center;font-size:13px;color:#606266;">23</div>
<div class="t" style="left:577.9px;top:341px;width:40px;text-align:center;font-size:13px;color:#606266;">24</div>
<div class="t" style="left:619.2px;top:341px;width:40px;text-align:center;font-size:13px;color:#606266;">25</div>
<div class="t" style="left:660.5px;top:341px;width:40px;text-align:center;font-size:13px;color:#606266;">26</div>
<div style="left:709.8px;top:336px;width:24px;height:24px;border-radius:12px;background:#409eff"></div>
<div class="t" style="left:701.8px;top:341px;width:40px;text-align:center;font-size:13px;color:#fff;">27</div>
<div class="t" style="left:743.1px;top:341px;width:40px;text-align:center;font-size:13px;color:#606266;">28</div>
<div class="t" style="left:784.4px;top:341px;width:40px;text-align:center;font-size:13px;color:#606266;">29</div>
<div style="left:536.0px;top:371px;width:82.6px;height:30px;background:#f2f6fc;border-radius:0 0 0 0"></div>
<div class="t" style="left:536.6px;top:379px;width:40px;text-align:center;font-size:13px;color:#606266;">30</div>
<div class="t" style="left:577.9px;top:379px;width:40px;text-align:center;font-size:13px;color:#606266;">31</div>
<div class="t" style="left:619.2px;top:379px;width:40px;text-align:center;font-size:13px;color:#c0c4cc;">1</div>
<div class="t" style="left:660.5px;top:379px;width:40px;text-align:center;font-size:13px;color:#c0c4cc;">2</div>
<div class="t" style="left:701.8px;top:379px;width:40px;text-align:center;font-size:13px;color:#c0c4cc;">3</div>
<div class="t" style="left:743.1px;top:379px;width:40px;text-align:center;font-size:13px;color:#c0c4cc;">4</div>
<div class="t" style="left:784.4px;top:379px;width:40px;text-align:center;font-size:13px;color:#c0c4cc;">5</div>
<div class="t" style="left:858.7px;top:149px;width:40px;text-align:center;font-size:13px;color:#606266">日</div>
<div class="t" style="left:900.1px;top:149px;width:40px;text-align:center;font-size:13px;color:#606266">一</div>
<div class="t" style="left:941.6px;top:149px;width:40px;text-align:center;font-size:13px;color:#606266">二</div>
<div class="t" style="left:983.0px;top:149px;width:40px;text-align:center;font-size:13px;color:#606266">三</div>
<div class="t" style="left:1024.4px;top:149px;width:40px;text-align:center;font-size:13px;color:#606266">四</div>
<div class="t" style="left:1065.9px;top:149px;width:40px;text-align:center;font-size:13px;color:#606266">五</div>
<div class="t" style="left:1107.3px;top:149px;width:40px;text-align:center;font-size:13px;color:#606266">六</div>
<div style="left:858px;top:176px;width:290px;height:1px;background:#ebeef5"></div>
<div style="left:940.9px;top:181px;width:207.1px;height:30px;background:#f2f6fc;border-radius:0 0 0 0"></div>
<div class="t" style="left:858.7px;top:189px;width:40px;text-align:center;font-size:13px;color:#c0c4cc;">30</div>
<div class="t" style="left:900.1px;top:189px;width:40px;text-align:center;font-size:13px;color:#c0c4cc;">31</div>
<div class="t" style="left:941.6px;top:189px;width:40px;text-align:center;font-size:13px;color:#606266;">1</div>
<div class="t" style="left:983.0px;top:189px;width:40px;text-align:center;font-size:13px;color:#606266;">2</div>
<div class="t" style="left:1024.4px;top:189px;width:40px;text-align:center;font-size:13px;color:#606266;">3</div>
<div class="t" style="left:1065.9px;top:189px;width:40px;text-align:center;font-size:13px;color:#606266;">4</div>
<div class="t" style="left:1107.3px;top:189px;width:40px;text-align:center;font-size:13px;color:#606266;">5</div>
<div style="left:858.0px;top:219px;width:290.0px;height:30px;background:#f2f6fc;border-radius:0 0 0 0"></div>
<div class="t" style="left:858.7px;top:227px;width:40px;text-align:center;font-size:13px;color:#606266;">6</div>
<div class="t" style="left:900.1px;top:227px;width:40px;text-align:center;font-size:13px;color:#606266;">7</div>
<div class="t" style="left:941.6px;top:227px;width:40px;text-align:center;font-size:13px;color:#606266;">8</div>
<div class="t" style="left:983.0px;top:227px;width:40px;text-align:center;font-size:13px;color:#606266;">9</div>
<div class="t" style="left:1024.4px;top:227px;width:40px;text-align:center;font-size:13px;color:#606266;">10</div>
<div class="t" style="left:1065.9px;top:227px;width:40px;text-align:center;font-size:13px;color:#606266;">11</div>
<div class="t" style="left:1107.3px;top:227px;width:40px;text-align:center;font-size:13px;color:#606266;">12</div>
<div style="left:858.0px;top:257px;width:290.0px;height:30px;background:#f2f6fc;border-radius:0 0 0 0"></div>
<div class="t" style="left:858.7px;top:265px;width:40px;text-align:center;font-size:13px;color:#606266;">13</div>
<div class="t" style="left:900.1px;top:265px;width:40px;text-align:center;font-size:13px;color:#606266;">14</div>
<div class="t" style="left:941.6px;top:265px;width:40px;text-align:center;font-size:13px;color:#606266;">15</div>
<div class="t" style="left:983.0px;top:265px;width:40px;text-align:center;font-size:13px;color:#606266;">16</div>
<div class="t" style="left:1024.4px;top:265px;width:40px;text-align:center;font-size:13px;color:#606266;">17</div>
<div class="t" style="left:1065.9px;top:265px;width:40px;text-align:center;font-size:13px;color:#606266;">18</div>
<div class="t" style="left:1107.3px;top:265px;width:40px;text-align:center;font-size:13px;color:#606266;">19</div>
<div style="left:858.0px;top:295px;width:243.6px;height:30px;background:#f2f6fc;border-radius:0 15px 15px 0"></div>
<div class="t" style="left:858.7px;top:303px;width:40px;text-align:center;font-size:13px;color:#606266;">20</div>
<div class="t" style="left:900.1px;top:303px;width:40px;text-align:center;font-size:13px;color:#606266;">21</div>
<div class="t" style="left:941.6px;top:303px;width:40px;text-align:center;font-size:13px;color:#606266;">22</div>
<div class="t" style="left:983.0px;top:303px;width:40px;text-align:center;font-size:13px;color:#606266;">23</div>
<div class="t" style="left:1024.4px;top:303px;width:40px;text-align:center;font-size:13px;color:#606266;">24</div>
<div style="left:1073.9px;top:298px;width:24px;height:24px;border-radius:12px;background:#409eff"></div>
<div class="t" style="left:1065.9px;top:303px;width:40px;text-align:center;font-size:13px;color:#fff;font-weight:bold;">25</div>
<div class="t" style="left:1107.3px;top:303px;width:40px;text-align:center;font-size:13px;color:#606266;">26</div>
<div class="t" style="left:858.7px;top:341px;width:40px;text-align:center;font-size:13px;color:#606266;">27</div>
<div class="t" style="left:900.1px;top:341px;width:40px;text-align:center;font-size:13px;color:#606266;">28</div>
<div class="t" style="left:941.6px;top:341px;width:40px;text-align:center;font-size:13px;color:#606266;">29</div>
<div class="t" style="left:983.0px;top:341px;width:40px;text-align:center;font-size:13px;color:#606266;">30</div>
<div class="t" style="left:1024.4px;top:341px;width:40px;text-align:center;font-size:13px;color:#c0c4cc;">1</div>
<div class="t" style="left:1065.9px;top:341px;width:40px;text-align:center;font-size:13px;color:#c0c4cc;">2</div>
<div class="t" style="left:1107.3px;top:341px;width:40px;text-align:center;font-size:13px;color:#c0c4cc;">3</div>
<div class="t" style="left:858.7px;top:379px;width:40px;text-align:center;font-size:13px;color:#c0c4cc;">4</div>
<div class="t" style="left:900.1px;top:379px;width:40px;text-align:center;font-size:13px;color:#c0c4cc;">5</div>
<div class="t" style="left:941.6px;top:379px;width:40px;text-align:center;font-size:13px;color:#c0c4cc;">6</div>
<div class="t" style="left:983.0px;top:379px;width:40px;text-align:center;font-size:13px;color:#c0c4cc;">7</div>
<div class="t" style="left:1024.4px;top:379px;width:40px;text-align:center;font-size:13px;color:#c0c4cc;">8</div>
<div class="t" style="left:1065.9px;top:379px;width:40px;text-align:center;font-size:13px;color:#c0c4cc;">9</div>
<div class="t" style="left:1107.3px;top:379px;width:40px;text-align:center;font-size:13px;color:#c0c4cc;">10</div>
<svg style="left:0;top:0" width="460" height="180" viewBox="0 0 460 180"><path d="M103.0,162.1 L120.0,157.1 L138.0,152.0 L170.0,143.0 L220.0,129.2 L280.0,112.6 L340.0,96.2 L409.0,77.4 L404.4,69.1 L438.6,75.2 L412,97.2 L411.5,89.1 L340.0,107.2 L280.0,122.2 L220.0,137.2 L170.0,149.7 L138.0,157.5 L120.0,161.7 L103.0,165.8 A1.85,1.85 0 0 1 103.0,162.1 Z" fill="#e81c24"/></svg>
</body></html>
